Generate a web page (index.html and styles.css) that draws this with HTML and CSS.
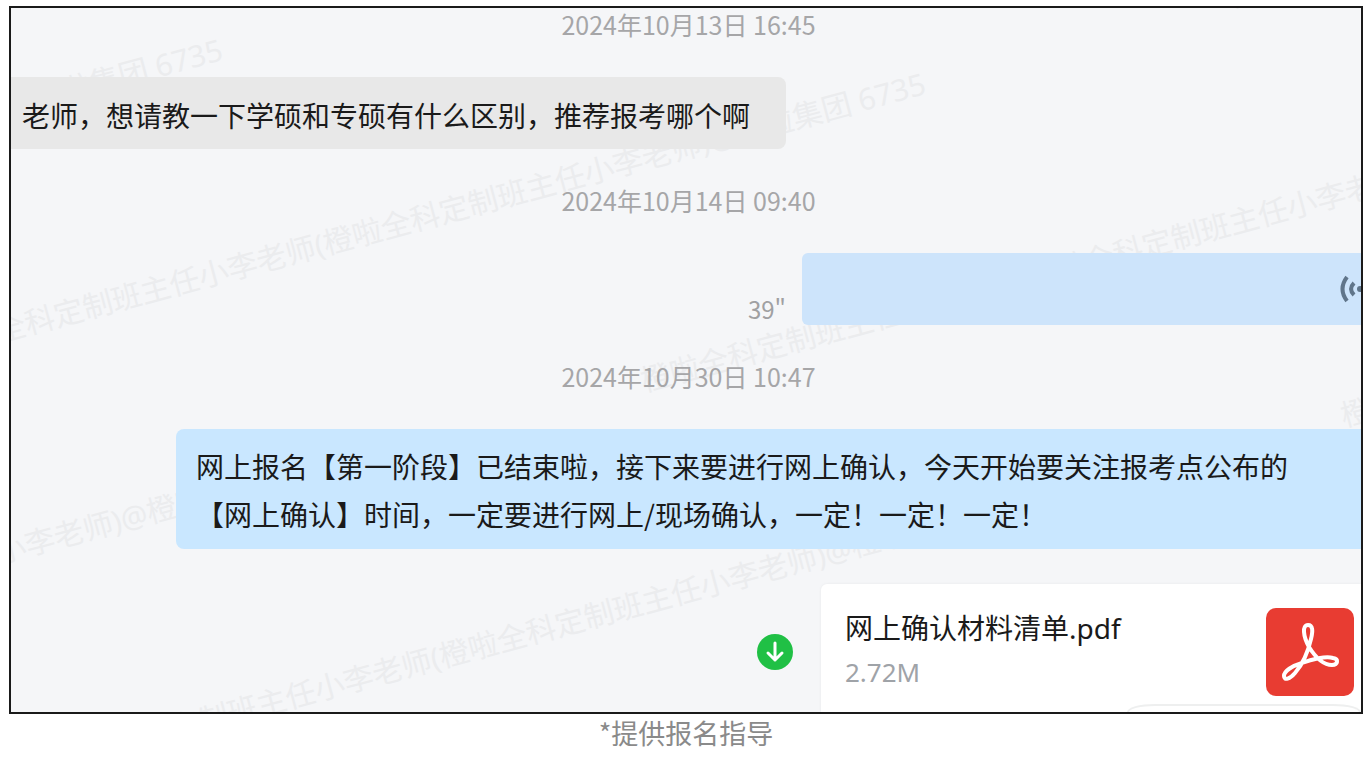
FILE: index.html
```html
<!DOCTYPE html>
<html lang="zh-CN">
<head>
    <meta charset="UTF-8">
    <meta name="viewport" content="width=device-width, initial-scale=1.0">
    <title>提供报名指导</title>
    <link rel="stylesheet" href="styles.css">
</head>
<body>
    <figure class="record">
        <div class="chat">
            <!-- Watermark tiles -->
            <svg class="watermark" aria-hidden="true">
                <defs>
                    <text id="mark" transform="rotate(-15)">橙啦全科定制班主任小李老师(橙啦全科定制班主任小李老师)@橙啦集团 6735</text>
                </defs>
                <use href="#mark" x="1220" y="0"/>
                <use href="#mark" x="-773" y="316"/>
                <use href="#mark" x="-70" y="350"/>
                <use href="#mark" x="633" y="384"/>
                <use href="#mark" x="1333" y="419"/>
                <use href="#mark" x="-658" y="729"/>
                <use href="#mark" x="46" y="763"/>
            </svg>

            <time class="date">2024年10月13日 16:45</time>
            <div class="row">
                <div class="bubble bubble-other">老师，想请教一下学硕和专硕有什么区别，推荐报考哪个啊</div>
            </div>

            <time class="date">2024年10月14日 09:40</time>
            <div class="row row-self">
                <span class="duration">39"</span>
                <button class="voice" type="button" aria-label="播放语音">
                    <svg width="22" height="32" viewBox="0 0 22 32">
                        <path d="M8 4Q-1 16 8 28"/>
                        <path d="M15 10Q9 16 15 22"/>
                        <circle cx="21" cy="16" r="3"/>
                    </svg>
                </button>
            </div>

            <time class="date">2024年10月30日 10:47</time>
            <div class="bubble bubble-self">网上报名【第一阶段】已结束啦，接下来要进行网上确认，今天开始要关注报考点公布的<br>【网上确认】时间，一定要进行网上/现场确认，一定！一定！一定！</div>

            <div class="row row-self row-file">
                <button class="download" type="button" aria-label="下载">
                    <svg width="36" height="36" viewBox="0 0 36 36">
                        <path d="M18 9V26M11 19L18 26L25 19"/>
                    </svg>
                </button>
                <div class="file">
                    <div class="file-main">
                        <div class="file-info">
                            <div class="file-name">网上确认材料清单.pdf</div>
                            <div class="file-size">2.72M</div>
                        </div>
                        <svg class="file-icon" width="88" height="88" viewBox="0 0 88 88">
                            <rect width="88" height="88" rx="10"/>
                            <path d="M42 17C36 17 37 28 43 39C48 47 56 57 66 57C72 57 73 51 67 50C60 48 46 51 36 55C26 58 18 63 18 68C18 73 24 71 29 65C36 57 42 44 45 31C47 23 47 17 42 17Z"/>
                        </svg>
                    </div>
                    <div class="file-action"></div>
                </div>
            </div>
        </div>
        <figcaption class="caption">*提供报名指导</figcaption>
    </figure>
</body>
</html>
```

FILE: styles.css
```css
body {
    margin: 0;
    background-color: #fff;
    font-family: "Noto Sans CJK SC", sans-serif;
    color: #1a1a1a;
}
button {
    border: none;
    padding: 0;
    cursor: pointer;
}
svg {
    display: block;
}
.record {
    margin: 0;
    padding: 6px 5px 0 9px;
}
.chat {
    position: relative;
    display: flex;
    flex-direction: column;
    gap: 35px;
    overflow: hidden;
    border: 2px solid #1a1a1a;
    background-color: #f5f6f8;
}
.watermark {
    position: absolute;
    top: 0;
    left: 0;
    width: 100%;
    height: 100%;
    font-family: "Noto Sans", "Noto Sans CJK SC", sans-serif;
    font-size: 30px;
    fill: #ebecee;
}
.date {
    position: relative;
    padding-left: 5px;
    padding-bottom: 2px;
    font-size: 25px;
    line-height: 32px;
    text-align: center;
    color: #a6a6a8;
}
.row {
    position: relative;
    display: flex;
}
.row-self {
    justify-content: flex-end;
    align-items: flex-end;
    gap: 16px;
}
.row-file {
    align-items: flex-start;
    gap: 28px;
}
.bubble {
    position: relative;
    padding: 13px 20px 11px;
    font-size: 28px;
    line-height: 48px;
}
.bubble-other {
    padding: 14px 36px 10px 11px;
    border-radius: 0 8px 8px 0;
    background-color: #e8e8e8;
}
.bubble-self {
    margin-left: 165px;
    padding-right: 0;
    border-radius: 8px 0 0 8px;
    background-color: #c9e7ff;
}
.duration {
    font-size: 24px;
    line-height: 32px;
    color: #a0a0a2;
}
.voice {
    display: flex;
    justify-content: flex-end;
    align-items: center;
    width: 559px;
    height: 72px;
    border-radius: 6px 0 0 6px;
    background-color: #cde4fb;
}
.voice path {
    fill: none;
    stroke: #60758a;
    stroke-width: 4;
}
.voice circle {
    fill: #60758a;
}
.download {
    margin-top: 50px;
    border-radius: 50%;
    background-color: #20c045;
}
.download path {
    fill: none;
    stroke: #fff;
    stroke-width: 3;
    stroke-linecap: round;
    stroke-linejoin: round;
}
.file {
    width: 540px;
    border-radius: 6px 0 0 0;
    background-color: #fff;
    box-shadow: 0 0 3px rgba(0, 0, 0, 0.06);
}
.file-main {
    display: flex;
    justify-content: space-between;
    padding: 24px 7px 8px 24px;
    font-family: "Noto Sans", "Noto Sans CJK SC", sans-serif;
}
.file-name {
    font-size: 28px;
    line-height: 40px;
}
.file-size {
    font-size: 26px;
    line-height: 48px;
    color: #9fa3a8;
}
.file-icon rect {
    fill: #e83c32;
}
.file-icon path {
    fill: none;
    stroke: #fff;
    stroke-width: 4;
}
.file-action {
    box-sizing: border-box;
    width: 234px;
    height: 8px;
    margin-left: auto;
    border: 2px solid #eeefef;
    border-bottom: none;
    border-radius: 28px 28px 0 0 / 8px 8px 0 0;
}
.caption {
    font-size: 27px;
    line-height: 38px;
    text-align: center;
    color: #8a8a8a;
}
```
